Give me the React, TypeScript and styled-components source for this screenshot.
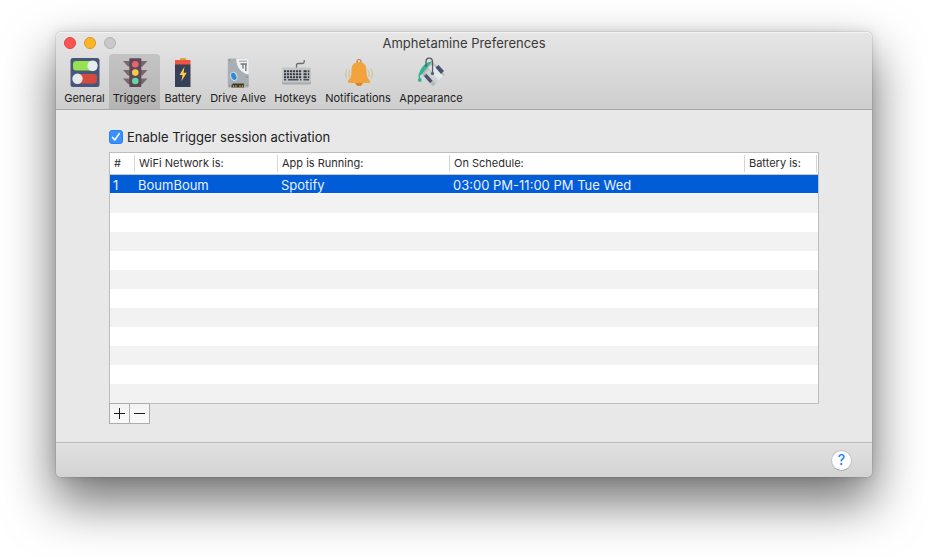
import React, { useState } from "react";
import styled, { createGlobalStyle, css } from "styled-components";

const GlobalStyle = createGlobalStyle`
  * { box-sizing: border-box; }
  body {
    margin: 0;
    background: #fff;
    color: #262626;
    font-family: Inter, "Liberation Sans", sans-serif;
    font-size: 13px;
    line-height: 16px;
  }
  button, input { font: inherit; color: inherit; }
`;

const Desktop = styled.div`
  padding: 32px 56px 80px;
  overflow: hidden;
`;

const Window = styled.main`
  border-radius: 5px;
  background: #e8e8e8;
  box-shadow:
    0 0 1px rgba(0, 0, 0, 0.6),
    0 24px 50px 2px rgba(0, 0, 0, 0.55),
    0 0 12px rgba(0, 0, 0, 0.12);
`;

const Header = styled.header`
  border-bottom: 1px solid #a6a6a6;
  border-radius: 5px 5px 0 0;
  background: linear-gradient(#e6e6e6, #cecece);
  box-shadow: inset 0 1px #f3f3f3;
`;

const TitleBar = styled.div`
  display: grid;
  grid-template-columns: 1fr auto 1fr;
  align-items: center;
  height: 22px;
  padding: 0 8px;
`;

const Title = styled.h1`
  margin: 0;
  font-size: 13px;
  font-weight: 400;
  color: #3a3a3a;
`;

const Lights = styled.div`
  display: flex;
  gap: 8px;
`;

const Light = styled.button<{ $fill: string; $edge: string }>`
  width: 12px;
  height: 12px;
  padding: 0;
  border: 1px solid ${(p) => p.$edge};
  border-radius: 50%;
  background: ${(p) => p.$fill};
`;

const Toolbar = styled.nav`
  display: grid;
  grid-template-columns: 49px 51px 46px 64px 51px 74px 72px;
  height: 55px;
  padding: 0 4px;
`;

const Tab = styled.button<{ $active: boolean }>`
  display: flex;
  flex-direction: column;
  align-items: center;
  gap: 2px;
  padding: 3px 0 0;
  border: 0;
  border-radius: 4px 4px 0 0;
  background: ${(p) => (p.$active ? "rgba(0, 0, 0, 0.12)" : "transparent")};
  color: #1c1c1c;
  font-size: 11px;
  line-height: 14px;
  white-space: nowrap;

  svg { display: block; flex: none; }
`;

const Content = styled.section`
  padding: 19px 53px 18px;
`;

const CheckLabel = styled.label`
  display: flex;
  align-items: center;
  gap: 4px;
  margin-bottom: 7px;
  color: #222;
`;

const Checkbox = styled.input`
  appearance: none;
  width: 14px;
  height: 14px;
  margin: 0;
  border: 1px solid #b5b5b5;
  border-radius: 3px;
  background: #fff;

  &:checked {
    border-color: #2a81f0;
    background: #3b91fb
      url("data:image/svg+xml,%3Csvg xmlns='http://www.w3.org/2000/svg' viewBox='0 0 12 12'%3E%3Cpath d='M2.6 6.4 4.8 9 9.3 2.6' fill='none' stroke='white' stroke-width='1.6' stroke-linecap='round' stroke-linejoin='round'/%3E%3C/svg%3E");
  }
`;

const TableFrame = styled.div`
  border: 1px solid #bdbdbd;
  background: #fff;
`;

const Table = styled.table`
  width: 100%;
  table-layout: fixed;
  border-collapse: separate;
  border-spacing: 0;
`;

const HeadCell = styled.th`
  height: 22px;
  padding: 0;
  border-bottom: 1px solid #c9c9c9;
  font-size: 11px;
  line-height: 16px;
  font-weight: 400;
  text-align: left;
  white-space: nowrap;
  color: #2c2c2c;
`;

const HeadText = styled.span<{ $last: boolean }>`
  display: block;
  margin-right: ${(p) => (p.$last ? 1 : 0)}px;
  padding: 0 0 1px 4px;
  border-right: 1px solid #d6d6d6;
`;

const Row = styled.tr<{ $selected: boolean }>`
  background: transparent;

  &:nth-child(even) { background: #f2f2f2; }

  ${(p) =>
    p.$selected &&
    css`
      background: linear-gradient(#005dd7, #005dd7) no-repeat 0 0 / 100% 18px;
      color: #e9f1ff;
    `}
`;

const Cell = styled.td`
  height: 19px;
  padding: 2px 0 0 3px;
  font-size: 13px;
  line-height: 17px;
  white-space: nowrap;
`;

const Actions = styled.div`
  display: flex;
  margin-top: -1px;
`;

const ActionButton = styled.button`
  display: grid;
  place-items: center;
  width: 21px;
  height: 21px;
  padding: 0;
  border: 1px solid #adadad;
  background: linear-gradient(#f3f3f3 25%, #f8f8f8 25%);

  & + & { margin-left: -1px; }
`;

const Footer = styled.footer`
  display: flex;
  justify-content: flex-end;
  align-items: center;
  height: 35px;
  padding: 0 20px;
  border-top: 1px solid #bababa;
  border-radius: 0 0 5px 5px;
  background: linear-gradient(#e1e1e1, #d3d3d3);
`;

const HelpButton = styled.button`
  width: 21px;
  height: 21px;
  padding: 0;
  border: 1px solid #c3c3c3;
  border-bottom-color: #aaa;
  border-radius: 50%;
  background: #fff;
  color: #1a80fb;
  font-size: 14px;
  font-weight: 500;
  line-height: 18px;
`;

const Icon = ({ children }: { children: React.ReactNode }) => (
  <svg width="32" height="32" viewBox="0 0 32 32" aria-hidden="true">
    {children}
  </svg>
);

const GeneralIcon = () => (
  <Icon>
    <rect x="1.5" y="1" width="29" height="29" rx="2.5" fill="#47577c" />
    <rect x="4" y="4" width="24" height="9.5" rx="3" fill="#98e14f" />
    <circle cx="23.5" cy="8.8" r="5.2" fill="#e9edf0" />
    <rect x="4.5" y="17" width="23.5" height="9.5" rx="3" fill="#d54c3f" />
    <circle cx="8.5" cy="21.8" r="5.2" fill="#e4e9ec" />
  </Icon>
);

const TriggersIcon = () => (
  <Icon>
    <g fill="#7d6570">
      <path d="M4 4h24.5l-5 5.5h-14.5z" />
      <path d="M4 13h24.5l-5 5.5h-14.5z" />
      <path d="M4 21.5h24.5l-5 5.5h-14.5z" />
    </g>
    <rect x="10.3" y="1.2" width="12" height="28.8" rx="1" fill="#5c4856" />
    <circle cx="16.3" cy="7.2" r="3.3" fill="#e5646e" />
    <circle cx="16.3" cy="15.6" r="3.3" fill="#f3c84b" />
    <circle cx="16.3" cy="24" r="3.3" fill="#67d5a2" />
  </Icon>
);

const BatteryIcon = () => (
  <Icon>
    <rect x="13" y="1" width="6" height="3" rx="1" fill="#d9a33d" />
    <rect x="8" y="3" width="15.5" height="5" rx="0.5" fill="#ed5540" />
    <path d="M8 7.5h15.500V29.5q0 .5-.5.5H8.500q-.5 0-.5-.5z" fill="#364057" />
    <path d="M17.5 9.5 12.5 18h3l-1 6 5.3-8.3h-3.2z" fill="#ffc94c" />
  </Icon>
);

const DriveIcon = () => (
  <Icon>
    <rect x="5.8" y="1.5" width="21" height="29" rx="1" fill="#a8afb4" />
    <path d="M14.2 1.5H26.8V17.500C19.5 16.500 14.200 10.500 14.200 1.500z" fill="#eef0f1" />
    <path d="M17 4.200h8" stroke="#a5abb0" strokeWidth="1.200" />
    <path d="M18.500 7h6.500M21 7v4.500M23.800 7v7" stroke="#737b82" strokeWidth="1.400" fill="none" />
    <ellipse cx="11.800" cy="19.300" rx="3.700" ry="4.700" transform="rotate(-20 11.8 19.3)" fill="#d5dade" />
    <ellipse cx="11.800" cy="19.300" rx="2.500" ry="3.700" transform="rotate(-20 11.8 19.3)" fill="#2c8bd8" />
    <path d="M9.500 30.500v-2.500l1.500-1.500h11v4z" fill="#3d3a35" />
    <path d="M11.500 28.300v2.200M14 28.300v2.200M18 28.300v2.200M20.500 28.300v2.200" stroke="#d9993c" strokeWidth="1.2" />
    <g fill="#7d858b">
      <circle cx="7.500" cy="3.200" r=".7" />
      <circle cx="25" cy="20" r=".7" />
      <circle cx="7.500" cy="28.500" r=".7" />
      <circle cx="25" cy="28.500" r=".7" />
    </g>
  </Icon>
);

const HotkeysIcon = () => (
  <Icon>
    <path d="M16.500 11V8q0-1.500 1.500-1.500h4.500q1.700 0 1.700-1.700V3" fill="none" stroke="#6a6d70" strokeWidth="1.300" />
    <rect x="2" y="11" width="29" height="16.500" rx="1.500" fill="#a5aaae" />
    <rect x="2" y="10.500" width="29" height="15" rx="1.500" fill="#c2c6c9" />
    <path d="M4 14.200h17.500M4 17.200h17.500M4 20.200h17.500" stroke="#343a42" strokeWidth="2.100" strokeDasharray="2.200 .8" />
    <path d="M23.500 14.200h3.200M23.500 17.200h3.200M23.500 20.200h3.200M27.800 14.200h1.500M27.800 17.200h1.500M27.800 20.200h1.500" stroke="#343a42" strokeWidth="2.100" />
    <path d="M4 22.800h2.300M8 22.800h10.500M20 22.800h1.500M23.500 22.800h5.500" stroke="#4a5058" strokeWidth="1.400" />
  </Icon>
);

const BellIcon = () => (
  <Icon>
    <circle cx="17" cy="4.500" r="2" fill="none" stroke="#c57f32" strokeWidth="1.200" />
    <path d="M13 25h8q-.5 4-4 4t-4-4z" fill="#d9822a" />
    <path d="M17 5c-5.500 0-7.500 4-7.500 8.500 0 5-.5 7-3 9.500-1 1-.8 3 .5 3h20c1.300 0 1.500-2 .5-3-2.500-2.500-3-4.500-3-9.500C24.500 9 22.500 5 17 5z" fill="#f2a33c" />
    <path d="M8 13q-2.500 4 0 7.500M5.200 12.300q-3.400 4.700 0 9M26 13q2.500 4 0 7.500M28.800 12.300q3.400 4.700 0 9" fill="none" stroke="#cfc096" strokeWidth="1.100" />
  </Icon>
);

const AppearanceIcon = () => (
  <Icon>
    <path d="M17 4.500 30 17.500 18 29.500 6.500 17z" fill="#b4babd" />
    <path d="M13.500 10.500 17.500 7 28.500 19 23 24.500z" fill="#e4e8ea" />
    <path d="M10.500 15.500 13.500 12.500 24 23.500 21 26.500z" fill="#cdd2d5" />
    <path d="M20.500 10.500 23.500 8 29 14 26 17z" fill="#47526f" />
    <path d="M9 19 11.500 17 17.500 23.800 15 26z" fill="#47526f" />
    <path d="M17 4.500 7 17Q4 18 5.500 23 3 21.500 3.500 17.500 5 12 9 8 13 4 17 4.500z" fill="#2db691" />
    <circle cx="4.800" cy="23" r="1.900" fill="#2db691" />
    <path d="M11 10V5Q11 1.200 14.200 1.200T17.500 5v11" fill="none" stroke="#515867" strokeWidth="1.300" />
    <circle cx="17.500" cy="16.500" r="1.600" fill="#515867" />
  </Icon>
);

const tabs = [
  { name: "General", Glyph: GeneralIcon },
  { name: "Triggers", Glyph: TriggersIcon },
  { name: "Battery", Glyph: BatteryIcon },
  { name: "Drive Alive", Glyph: DriveIcon },
  { name: "Hotkeys", Glyph: HotkeysIcon },
  { name: "Notifications", Glyph: BellIcon },
  { name: "Appearance", Glyph: AppearanceIcon },
];

const columns = [
  { title: "#", width: 25 },
  { title: "WiFi Network is:", width: 143 },
  { title: "App is Running:", width: 172 },
  { title: "On Schedule:" },
  { title: "Battery is:", width: 73 },
];

const triggers = [["1", "BoumBoum", "Spotify", "03:00 PM-11:00 PM Tue Wed", ""]];
const visibleRows = 12;

export default function App() {
  const [tab, setTab] = useState("Triggers");
  const [enabled, setEnabled] = useState(true);
  const rows = Array.from({ length: visibleRows }, (_, i) => triggers[i] ?? columns.map(() => ""));

  return (
    <>
      <GlobalStyle />
      <Desktop>
        <Window>
          <Header>
            <TitleBar>
              <Lights>
                <Light $fill="#fc5551" $edge="#df4340" aria-label="Close" />
                <Light $fill="#fdb427" $edge="#dc981f" aria-label="Minimize" />
                <Light $fill="#c9c9c9" $edge="#b3b3b3" aria-label="Zoom" disabled />
              </Lights>
              <Title>Amphetamine Preferences</Title>
            </TitleBar>
            <Toolbar>
              {tabs.map(({ name, Glyph }) => (
                <Tab key={name} $active={tab === name} onClick={() => setTab(name)}>
                  <Glyph />
                  {name}
                </Tab>
              ))}
            </Toolbar>
          </Header>
          <Content>
            <CheckLabel>
              <Checkbox type="checkbox" checked={enabled} onChange={(e) => setEnabled(e.target.checked)} />
              Enable Trigger session activation
            </CheckLabel>
            <TableFrame>
              <Table>
                <colgroup>
                  {columns.map((c) => (
                    <col key={c.title} width={c.width} />
                  ))}
                </colgroup>
                <thead>
                  <tr>
                    {columns.map((c, i) => (
                      <HeadCell key={c.title} scope="col">
                        <HeadText $last={i === columns.length - 1}>{c.title}</HeadText>
                      </HeadCell>
                    ))}
                  </tr>
                </thead>
                <tbody>
                  {rows.map((cells, i) => (
                    <Row key={i} $selected={i === 0}>
                      {cells.map((text, j) => (
                        <Cell key={j}>{text}</Cell>
                      ))}
                    </Row>
                  ))}
                </tbody>
              </Table>
            </TableFrame>
            <Actions>
              <ActionButton aria-label="Add trigger">
                <svg width="11" height="11" viewBox="0 0 11 11" aria-hidden="true">
                  <path d="M5.500 0v11M0 5.500h11" stroke="#1c1c1c" />
                </svg>
              </ActionButton>
              <ActionButton aria-label="Remove trigger">
                <svg width="11" height="11" viewBox="0 0 11 11" aria-hidden="true">
                  <path d="M0 5.500h11" stroke="#1c1c1c" />
                </svg>
              </ActionButton>
            </Actions>
          </Content>
          <Footer>
            <HelpButton aria-label="Help">?</HelpButton>
          </Footer>
        </Window>
      </Desktop>
    </>
  );
}
